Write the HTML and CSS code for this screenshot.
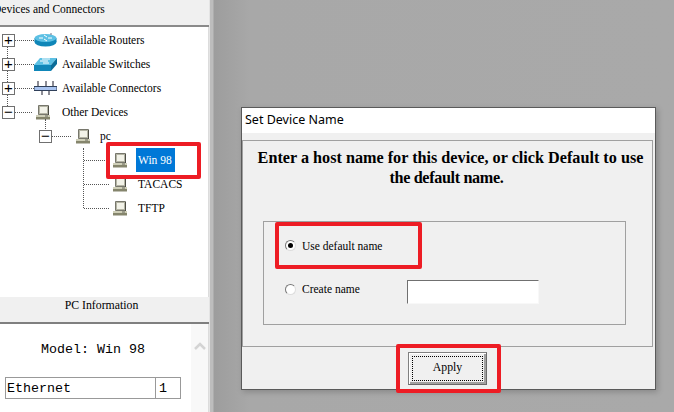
FILE: index.html
```html
<!DOCTYPE html>
<html lang="en">
<head>
<meta charset="utf-8">
<title>Set Device Name</title>
<link rel="stylesheet" href="styles.css">
</head>
<body>
<svg class="defs" width="0" height="0" aria-hidden="true">
  <symbol id="pc" viewBox="0 0 16 16">
    <path d="M3.500 1.500h10v9h-10z" fill="#b4b4a4" stroke="#77776c"/>
    <path d="M5 3h7v6H5z" fill="#f2f2e8"/>
    <path d="M13.500 2v9" stroke="#4c4c44"/>
    <path d="M1 11h14v2H1z" fill="#cfcfb8"/>
    <path d="M1 13h14v2.500H1z" fill="#85856c"/>
    <path d="M10 12h3" stroke="#66665a"/>
  </symbol>
</svg>
<div class="app">
  <aside class="side">
    <div class="side-head">Devices and Connectors</div>
    <div class="tree">
      <div class="spine"></div>
      <div class="row"><span class="box">+</span><span class="dots"></span>
        <svg class="ic-wide" viewBox="0 0 23 14"><ellipse cx="11.500" cy="9" rx="11" ry="4.500" fill="#0f86b8"/><rect x="0.500" y="5" width="22" height="4" fill="#0f86b8"/><ellipse cx="11.500" cy="5" rx="11" ry="4" fill="#5cc0e4"/><path d="M5 5h4M14 5h4M10 2l3 2M13 8l-3-2" stroke="#fff"/><path d="M17 0v2" stroke="#778"/></svg>
        <span class="label">Available Routers</span></div>
      <div class="row"><span class="box">+</span><span class="dots"></span>
        <svg class="ic-wide" viewBox="0 0 23 14"><path d="M6 1h17l-6 7H0z" fill="#5cc0e4"/><path d="M0 8h17v6H0z" fill="#0f86b8"/><path d="M17 8l6-7v6l-6 7z" fill="#0a6c98"/><path d="M6 4h8M9 6h6M8 2h8" stroke="#fff"/></svg>
        <span class="label">Available Switches</span></div>
      <div class="row"><span class="box">+</span><span class="dots"></span>
        <svg class="ic-wide" viewBox="0 0 23 14"><path d="M4 0v5M12 0v5M19 0v5M8 9v5M15 9v5" stroke="#1a1a2a"/><path d="M0 5.500h23v4H0z" fill="#a9c4f0" stroke="#30405a"/></svg>
        <span class="label">Available Connectors</span></div>
      <div class="row"><span class="box">−</span><span class="dots dots-short"></span>
        <svg class="ic"><use href="#pc"/></svg>
        <span class="label">Other Devices</span></div>
      <div class="spine-1"></div>
      <div class="row lvl1"><span class="box">−</span><span class="dots"></span>
        <svg class="ic"><use href="#pc"/></svg>
        <span class="label">pc</span></div>
      <div class="spine-2"></div>
      <div class="row lvl2"><span class="dots"></span>
        <svg class="ic"><use href="#pc"/></svg>
        <span class="label selected">Win 98</span></div>
      <div class="row lvl2"><span class="dots"></span>
        <svg class="ic"><use href="#pc"/></svg>
        <span class="label">TACACS</span></div>
      <div class="row lvl2"><span class="dots"></span>
        <svg class="ic"><use href="#pc"/></svg>
        <span class="label">TFTP</span></div>
      <div class="mark mark-tree"></div>
    </div>
    <div class="info-head">PC Information</div>
    <div class="info">
      <div class="info-main">
        <div class="model">Model: Win 98</div>
        <div class="ports"><span class="port-name">Ethernet</span><span class="port-count">1</span></div>
      </div>
      <div class="scroll"><svg class="chev" viewBox="0 0 12 8"><path d="M1 7l5-5 5 5" fill="none" stroke="#d4d4d4" stroke-width="2.500"/></svg></div>
    </div>
  </aside>
  <main class="stage">
    <section class="dialog">
      <div class="title">Set Device Name</div>
      <div class="dialog-body">
        <div class="content">
          <p class="lead">Enter a host name for this device, or click Default to use <span class="lead-end">the default name.</span></p>
          <div class="group">
            <div class="opt opt-first"><span class="radio on"></span><span>Use default name</span><div class="mark mark-opt"></div></div>
            <div class="opt"><span class="radio raised"></span><span class="opt-text raised">Create name</span><span class="field"></span></div>
          </div>
        </div>
        <div class="actions">
          <button class="apply" type="button"><span class="focus">Apply</span></button>
          <div class="mark mark-apply"></div>
        </div>
      </div>
    </section>
  </main>
</div>
</body>
</html>
```

FILE: styles.css
```css
* { box-sizing: border-box; }
html, body { margin: 0; height: 100%; overflow: hidden; }
body { width: 674px; height: 412px; font-family: "Liberation Serif", serif; font-size: 11.500px; color: #000; background: #f0f0f0; }
.defs { position: absolute; }
.app { display: flex; height: 412px; }

.side { width: 210px; flex: none; display: flex; flex-direction: column; background: #f0f0f0; border-right: 1px solid #e4e4e4; }
.side-head { height: 27px; padding: 3px 0 0; text-indent: -7px; font-size: 11.500px; line-height: 13px; border-bottom: 2px solid #8a8a8a; overflow: hidden; white-space: nowrap; }
.tree { position: relative; height: 270px; width: 209px; background: #fff; padding-top: 1px; border-right: 1px solid #dcdcdc; }
.row { position: relative; height: 24px; display: flex; align-items: center; padding-left: 2px; white-space: nowrap; }
.box { width: 13px; height: 13px; flex: none; border: 1px solid #707070; background: #fff; font: 15px/10px "Liberation Sans", sans-serif; text-align: center; color: #000; }
.dots { width: 19px; flex: none; border-top: 1px dotted #555; }
.dots-short { width: 17px; }
.ic-wide { width: 23px; height: 14px; flex: none; margin-right: 4px; }
.ic { width: 16px; height: 16px; flex: none; margin: 0 10px 0 3px; }
.label { display: block; line-height: 19px; padding: 0 1px; }
.spine { position: absolute; left: 7px; top: 19px; height: 64px; border-left: 1px dotted #555; }
.spine-1 { position: absolute; left: 45px; top: 92px; height: 12px; border-left: 1px dotted #555; }
.lvl1 { padding-left: 39px; }
.lvl1 .ic { margin: 0 8px 0 4px; }
.spine-2 { position: absolute; left: 83px; top: 121px; height: 60px; border-left: 1px dotted #555; }
.lvl2 { padding-left: 84px; }
.lvl2 .dots { width: 25px; }
.lvl2 .ic { margin: 0 8px 0 3px; }
.lvl2 .label { padding: 0 2px; }
.lvl2 .selected { background: #0078d7; color: #fff; width: 39px; line-height: 24px; height: 24px; }

.mark { position: absolute; border: 4px solid #ed1c24; border-radius: 2px; pointer-events: none; }
.mark-tree { left: 106px; top: 115px; width: 95px; height: 37px; }
.mark-opt { left: 11px; top: 0; width: 147px; height: 47px; }
.mark-apply { left: 154px; top: -3px; width: 105px; height: 49px; }

.info-head { height: 27px; text-align: center; font-size: 11.800px; line-height: 17px; padding-right: 6px; border-bottom: 2px solid #7f7f7f; }
.info { flex: 1; width: 209px; display: flex; background: #fff; border-right: 1px solid #dcdcdc; }
.info-main { flex: 1; padding: 17px 0 0 5px; font-family: "Liberation Mono", monospace; font-size: 13.330px; }
.model { padding-left: 36px; line-height: 17px; }
.ports { display: flex; width: 176px; height: 22px; margin-top: 19px; border: 1px solid #999; line-height: 21px; }
.port-name { flex: 1; padding-left: 1px; border-right: 1px solid #999; }
.port-count { width: 24px; padding-left: 3px; }
.scroll { width: 17px; flex: none; background: #f8f8f8; padding: 18px 2px 0; }
.chev { width: 12px; height: 8px; display: block; margin: 0 auto; }

.stage { flex: 1; display: flex; align-items: flex-start; padding: 107px 0 0 31px; background: linear-gradient(90deg, #bdbdbd 0, #bdbdbd 3px, #9d9d9d 4px, #a8a8a8 40px, #a9a9a9 100%); }
.dialog { width: 415px; height: 283px; display: flex; flex-direction: column; background: #fff; border: 1px solid #5a5a5a; box-shadow: 2px 2px 6px rgba(0,0,0,.2); }
.title { height: 25px; flex: none; padding-left: 3px; font: 12.500px/24px "Noto Sans", "Open Sans", sans-serif; }
.dialog-body { flex: 1; display: flex; flex-direction: column; background: #f0f0f0; padding-top: 7px; }
.content { height: 207px; flex: none; padding: 7px 0 0; margin: 0 2px 0 0; border: 1px solid #a0a0a0; }
.lead { margin: 0 0 0 10px; width: 395px; text-align: center; font-weight: bold; font-size: 16.200px; line-height: 20px; }
.lead-end { display: block; padding-right: 8px; letter-spacing: -.35px; }
.group { width: 363px; height: 104px; margin: 33px 0 0 20px; border: 1px solid #a0a0a0; }
.opt { position: relative; height: 24px; display: flex; align-items: center; gap: 6px; padding-left: 21px; }
.opt-first { height: 47px; margin-bottom: 11px; }
.radio { width: 11px; height: 11px; flex: none; border: 1px solid #777; border-right-color: #ddd; border-bottom-color: #ddd; border-radius: 50%; background: #fff; display: flex; align-items: center; justify-content: center; }
.radio.on::after { content: ""; width: 5px; height: 5px; border-radius: 50%; background: #000; }
.raised { margin-bottom: 6px; }
.opt-text { width: 99px; }
.field { width: 132px; height: 24px; background: #fff; border: 1px solid; border-color: #707070 #f8f8f8 #f8f8f8 #707070; }
.actions { position: relative; flex: 1; padding: 5px 0 0 166px; }
.apply { display: block; width: 79px; height: 33px; padding: 3px; background: #f0f0f0; border: 1px solid; border-color: #808080 #6a6a6a #6a6a6a #808080; box-shadow: inset 1px 1px 0 #fff, inset -2px -2px 0 #a0a0a0; font: 11.800px "Liberation Serif", serif; }
.focus { display: block; height: 100%; line-height: 23px; outline: 1px dotted #000; outline-offset: -1px; }
```
